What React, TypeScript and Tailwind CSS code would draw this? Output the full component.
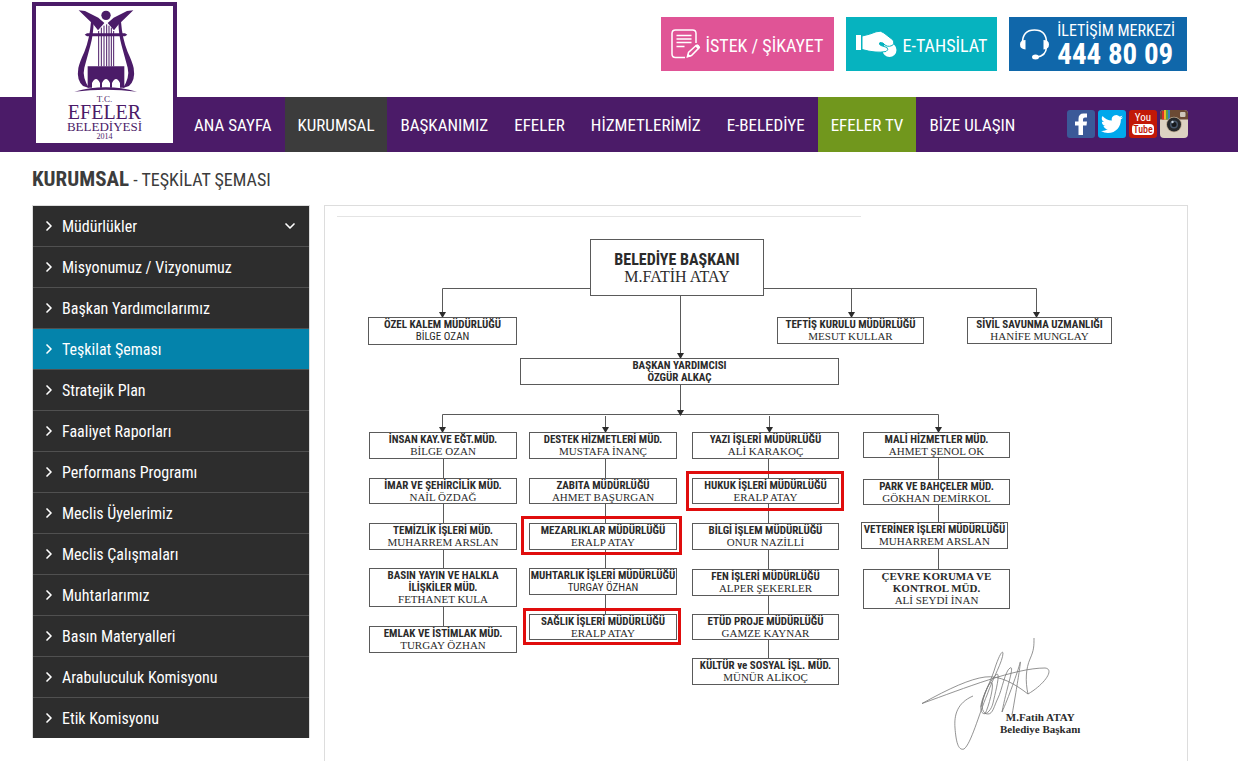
import { ReactNode } from "react";
import { ChevronDown, ChevronRight } from "lucide-react";

type NavItem = { label: string; className?: string };

const navItems: NavItem[] = [
  { label: "ANA SAYFA" },
  { label: "KURUMSAL", className: "bg-[#3c3c3c]" },
  { label: "BAŞKANIMIZ" },
  { label: "EFELER" },
  { label: "HİZMETLERİMİZ" },
  { label: "E-BELEDİYE" },
  { label: "EFELER TV", className: "bg-[#71971d]" },
  { label: "BİZE ULAŞIN" },
];

const sideItems = [
  "Müdürlükler",
  "Misyonumuz / Vizyonumuz",
  "Başkan Yardımcılarımız",
  "Teşkilat Şeması",
  "Stratejik Plan",
  "Faaliyet Raporları",
  "Performans Programı",
  "Meclis Üyelerimiz",
  "Meclis Çalışmaları",
  "Muhtarlarımız",
  "Basın Materyalleri",
  "Arabuluculuk Komisyonu",
  "Etik Komisyonu",
];

type ChartNode = {
  x: number;
  y: number;
  w: number;
  h: number;
  title: string[];
  name: string;
  kind?: "head" | "deputy" | "sans" | "serif";
};

const nodes: ChartNode[] = [
  { x: 265, y: 33, w: 174, h: 57, title: ["BELEDİYE BAŞKANI"], name: "M.FATİH ATAY", kind: "head" },
  { x: 43, y: 111, w: 149, h: 28, title: ["ÖZEL KALEM MÜDÜRLÜĞÜ"], name: "BİLGE OZAN", kind: "sans" },
  { x: 452, y: 111, w: 147, h: 27, title: ["TEFTİŞ KURULU MÜDÜRLÜĞÜ"], name: "MESUT KULLAR" },
  { x: 642, y: 111, w: 145, h: 27, title: ["SİVİL SAVUNMA UZMANLIĞI"], name: "HANİFE MUNGLAY" },
  { x: 195, y: 152, w: 319, h: 27, title: ["BAŞKAN YARDIMCISI"], name: "ÖZGÜR ALKAÇ", kind: "deputy" },

  { x: 44, y: 226, w: 148, h: 27, title: ["İNSAN KAY.VE EĞT.MÜD."], name: "BİLGE OZAN" },
  { x: 44, y: 272, w: 148, h: 26, title: ["İMAR VE ŞEHİRCİLİK MÜD."], name: "NAİL ÖZDAĞ" },
  { x: 44, y: 317, w: 148, h: 27, title: ["TEMİZLİK İŞLERİ MÜD."], name: "MUHARREM ARSLAN" },
  { x: 44, y: 362, w: 148, h: 39, title: ["BASIN YAYIN VE HALKLA", "İLİŞKİLER MÜD."], name: "FETHANET KULA" },
  { x: 44, y: 420, w: 148, h: 27, title: ["EMLAK VE İSTİMLAK MÜD."], name: "TURGAY ÖZHAN" },

  { x: 204, y: 226, w: 148, h: 27, title: ["DESTEK HİZMETLERİ MÜD."], name: "MUSTAFA İNANÇ" },
  { x: 204, y: 272, w: 148, h: 26, title: ["ZABITA MÜDÜRLÜĞÜ"], name: "AHMET BAŞURGAN" },
  { x: 204, y: 317, w: 148, h: 27, title: ["MEZARLIKLAR MÜDÜRLÜĞÜ"], name: "ERALP ATAY" },
  { x: 204, y: 362, w: 148, h: 27, title: ["MUHTARLIK İŞLERİ MÜDÜRLÜĞÜ"], name: "TURGAY ÖZHAN", kind: "sans" },
  { x: 204, y: 408, w: 148, h: 26, title: ["SAĞLIK İŞLERİ MÜDÜRLÜĞÜ"], name: "ERALP ATAY" },

  { x: 367, y: 226, w: 147, h: 27, title: ["YAZI İŞLERİ MÜDÜRLÜĞÜ"], name: "ALİ KARAKOÇ" },
  { x: 367, y: 272, w: 147, h: 26, title: ["HUKUK İŞLERİ MÜDÜRLÜĞÜ"], name: "ERALP ATAY" },
  { x: 367, y: 317, w: 147, h: 27, title: ["BİLGİ İŞLEM MÜDÜRLÜĞÜ"], name: "ONUR NAZİLLİ" },
  { x: 367, y: 363, w: 147, h: 27, title: ["FEN İŞLERİ MÜDÜRLÜĞÜ"], name: "ALPER ŞEKERLER" },
  { x: 367, y: 408, w: 147, h: 26, title: ["ETÜD PROJE MÜDÜRLÜĞÜ"], name: "GAMZE KAYNAR" },
  { x: 367, y: 452, w: 147, h: 27, title: ["KÜLTÜR ve SOSYAL İŞL. MÜD."], name: "MÜNÜR ALİKOÇ" },

  { x: 538, y: 226, w: 147, h: 26, title: ["MALİ HİZMETLER MÜD."], name: "AHMET ŞENOL OK" },
  { x: 538, y: 273, w: 147, h: 26, title: ["PARK VE BAHÇELER MÜD."], name: "GÖKHAN DEMİRKOL" },
  { x: 536, y: 316, w: 147, h: 27, title: ["VETERİNER İŞLERİ MÜDÜRLÜĞÜ"], name: "MUHARREM ARSLAN" },
  { x: 538, y: 363, w: 147, h: 40, title: ["ÇEVRE KORUMA VE", "KONTROL MÜD."], name: "ALİ SEYDİ İNAN", kind: "serif" },
];

const marks = [
  { x: 361, y: 265, w: 158, h: 40 },
  { x: 196, y: 310, w: 161, h: 39 },
  { x: 198, y: 402, w: 158, h: 37 },
];

const arrows = [
  [117, 111],
  [526, 111],
  [711, 111],
  [355, 152],
  [355, 209],
  [117, 226],
  [280, 226],
  [444, 226],
  [613, 226],
];

const Logo = () => (
  <a
    href="#"
    className="absolute left-8 top-[2px] flex h-[145px] w-[145px] flex-col items-center border-4 border-[#4b1b68] bg-white pt-[3px] font-['Liberation_Serif',serif] text-[#4b1b68]"
  >
    <svg width="64" height="84" viewBox="216 26 192 252" fill="currentColor" className="shrink-0">
      <circle cx="315" cy="45" r="14" />
      <path d="M233 30 252 32 292 52 310 68 291 90 278 73Z" />
      <path d="M397 30 378 32 338 52 320 68 339 90 352 73Z" />
      <path d="M270 64h8q-1 40-10 72l-18 66q-7 28 14 61l-18-6q-20-18-14-54 4-18 18-48 16-40 20-91Z" />
      <path d="M360 64h-8q1 40 10 72l18 66q7 28-14 61l18-6q20-18 14-54-4-18-18-48-16-40-20-91Z" />
      <path d="M251 103 258 99 372 99 379 103 372 108 258 108Z" />
      <path
        d="M293 92V198M301 82V198M309 76V198M317 72V198M324 76V198M331 82V198M338 92V198"
        stroke="currentColor"
        strokeWidth="3"
      />
      <path d="M260 198H370V262H357V248Q345 224 333 248V262H327V248Q315 224 303 248V262H297V248Q285 224 273 248V262H260Z" />
      <path d="M220 274Q315 248 408 274 315 262 220 274Z" />
    </svg>
    <span className="mt-[2px] text-[9px] leading-[8px]">T.C.</span>
    <span className="text-[20px] leading-[18px]">EFELER</span>
    <span className="text-[13px] leading-[12px]">BELEDİYESİ</span>
    <span className="text-[8px] leading-[8px]">2014</span>
  </a>
);

const TopButton = ({ className, children }: { className: string; children: ReactNode }) => (
  <a href="#" className={`flex h-[54px] items-center text-lg text-white ${className}`}>
    {children}
  </a>
);

const NoteIcon = () => (
  <svg width="30" height="30" viewBox="0 0 30 30" fill="none" stroke="#fff" strokeWidth="1.5">
    <path d="M14 28.500H4.500Q1 28.500 1 25V4.500Q1 1 4.500 1H21.500Q25 1 25 4.500V14" />
    <path d="M5.500 6.500h15M5.500 10h15M5.500 13.500h15M5.500 17.500h8" />
    <path d="M16.500 27.500 17.500 23.500 25 16.500Q27 15.500 28.300 18.500L20.500 26.500Z" />
    <path d="m24 17 3.500 3.500 1.500-2.500-2.500-2.500ZM15.500 28.800l4.500-1.300-3-3Z" fill="#fff" stroke="none" />
  </svg>
);

const HandIcon = () => (
  <svg width="41" height="27" viewBox="0 0 41 27" fill="#fff">
    <path d="M0 4h5v15H0z" />
    <circle cx="33.500" cy="19" r="7" />
    <path
      d="M6 5Q14 3.500 20 .8 25-1 28 2L37 9Q39 13 36 14.500 31 17 27 12L24 11.500Q22 13 25 14.500L31 16.500Q33 19 30 20.500 20 22.500 6 18.500Z"
      stroke="#06b3bf"
      strokeWidth="1"
    />
  </svg>
);

const HeadsetIcon = () => (
  <svg width="31" height="31" viewBox="0 0 31 31" fill="none" stroke="#fff" strokeWidth="1.600">
    <path d="M3.500 14Q3.500 1 15.500 1T27.500 14M27.500 18Q27 27 18 28" />
    <path
      d="M6.500 11v9.500Q1 20 1 15.500T6.500 11ZM24.500 11v9.500Q30 20 30 15.500T24.500 11Z"
      fill="#fff"
      stroke="none"
    />
    <ellipse cx="16.500" cy="28" rx="3.500" ry="2.500" fill="#fff" stroke="none" />
  </svg>
);

const Social = () => (
  <div className="ml-auto flex gap-[3px] self-start pt-[13px]">
    <a href="#" aria-label="Facebook">
      <svg width="28" height="28" viewBox="0 0 28 28">
        <rect width="28" height="28" rx="3" fill="#3b5998" />
        <path d="M11.500 25V15.500H8V11.500H11.500V9Q11.500 3.500 16.500 3.500H20V7.500H18Q16 7.500 16 9.200V11.500H20L19.500 15.500H16V25Z" fill="#fff" />
      </svg>
    </a>
    <a href="#" aria-label="Twitter">
      <svg width="28" height="28" viewBox="0 0 28 28">
        <rect width="28" height="28" rx="3" fill="#00a8ec" />
        <path
          transform="translate(3 3) scale(.92)"
          fill="#fff"
          d="M23.950 4.570a10 10 0 0 1-2.820.770 4.960 4.960 0 0 0 2.160-2.720c-.950.550-2 .950-3.130 1.180a4.920 4.920 0 0 0-8.380 4.480C7.690 8.090 4.070 6.130 1.640 3.160a4.920 4.920 0 0 0 1.520 6.570 4.900 4.900 0 0 1-2.230-.610v.060a4.920 4.920 0 0 0 3.950 4.830 5 5 0 0 1-2.210.080 4.940 4.940 0 0 0 4.600 3.420A9.870 9.870 0 0 1 0 19.540a14 14 0 0 0 7.550 2.210c9.050 0 14-7.500 14-13.980 0-.210 0-.420-.020-.630a9.940 9.940 0 0 0 2.460-2.550z"
        />
      </svg>
    </a>
    <a
      href="#"
      className="flex size-7 flex-col items-center rounded-[3px] bg-[#c21807] pt-[2px] text-[11px] leading-[12px] text-white"
    >
      <span>You</span>
      <span className="rounded-[4px] bg-white px-px text-[10px] font-medium leading-[11px] text-[#c21807]">Tube</span>
    </a>
    <a href="#" aria-label="Instagram">
      <svg width="28" height="28" viewBox="0 0 28 28">
        <rect width="28" height="28" rx="4" fill="#ddd2c2" />
        <path d="M0 9.500V4Q0 0 4 0H24Q28 0 28 4V9.500Z" fill="#6b4a34" />
        <path d="M2 1h2v8.500H2z" fill="#d5302c" />
        <path d="M4 0h2v9.500H4z" fill="#f0b429" />
        <path d="M6 0h2v9.500H6z" fill="#58a646" />
        <path d="M8 0h2v9.500H8z" fill="#3a7fc1" />
        <rect x="20" y="2" width="5.500" height="5" rx="1" fill="#cfc6ba" />
        <circle cx="14" cy="14.500" r="7.800" fill="#b7a58e" />
        <circle cx="14" cy="14.500" r="7" fill="#26282b" />
        <circle cx="14" cy="14.500" r="4" fill="#46566a" />
        <circle cx="14" cy="14.500" r="2.500" fill="#15181c" />
        <circle cx="12.500" cy="12" r="1.200" fill="#c5d3e2" />
      </svg>
    </a>
  </div>
);

const NodeBox = ({ node }: { node: ChartNode }) => {
  const big = node.kind === "head";
  return (
    <div
      className={`absolute flex flex-col items-center whitespace-nowrap border border-[#5a5a5a] bg-white text-[#2b2b2b] ${
        big ? "justify-center" : ""
      }`}
      style={{ left: node.x, top: node.y, width: node.w, height: node.h }}
    >
      {node.title.map((line) => (
        <p
          key={line}
          className={`font-bold ${big ? "text-base leading-[18px]" : "text-[11px] leading-[12px]"} ${
            node.kind === "serif" ? "font-['Liberation_Serif',serif]" : "pt-px -mb-px"
          }`}
        >
          {line}
        </p>
      ))}
      <p
        className={`${big ? "text-base leading-[18px]" : "text-[11px] leading-[12px]"} ${
          node.kind === "deputy" || node.kind === "sans" ? "pt-px" : "font-['Liberation_Serif',serif]"
        } ${node.kind === "deputy" ? "font-bold" : ""}`}
      >
        {node.name}
      </p>
    </div>
  );
};

const OrgChart = () => (
  <div className="relative h-[548px] w-[812px]">
    <svg width="812" height="548" className="absolute left-0 top-0" fill="none" stroke="#5a5a5a">
      <path d="M12 10.500H536" stroke="#e4e4e4" />
      <path d="M117.500 111V82.500H711.500V111M526.500 82.500V111M355.500 90V208.500M117.500 226V208.500H613.500V226M280.500 210V226M444.500 210V226" />
      <path d="M118.500 240V430M280.500 240V420M443.500 240V460M613.500 240V370" />
      {arrows.map(([x, y]) => (
        <path key={`${x}-${y}`} d={`M${x - 3} ${y - 5}h7l-3.500 6z`} fill="#2b2b2b" stroke="none" />
      ))}
      <g stroke="#777" strokeWidth=".8">
        <path d="M597 497.500C625 482 645 473 660 471S690 478 703 488C700 475 701 462 705 453S709 440 709 432" />
        <path d="M597 497.500C640 482 690 462 720 462 730 463 720 478 703 488" />
        <path d="M648 490C632 497 629 509 630 522S633 545 639 543C646 538 654 508 662 489 668 472 678 455 678 447 677 443 672 455 669 465 664 480 654 496 656 504 658 512 666 506 668 497S674 473 673 469 663 478 659 490 658 508 663 508 669 500 673 492 680 465 685 462 682 480 677 506" />
        <path d="M677 506C683 493 693 465 695 457S691 487 687 509M656 501C660 485 665 474 667 477S664 500 660 508" />
      </g>
    </svg>
    {nodes.map((node) => (
      <NodeBox key={`${node.x}-${node.y}`} node={node} />
    ))}
    {marks.map((m) => (
      <div
        key={`${m.x}-${m.y}`}
        className="absolute border-3 border-[#e00d0d]"
        style={{ left: m.x, top: m.y, width: m.w, height: m.h }}
      />
    ))}
    <div className="absolute left-[675px] top-[505px] text-center font-['Liberation_Serif',serif] text-[11px] font-bold leading-[12px] text-[#2b2b2b]">
      <p>M.Fatih ATAY</p>
      <p>Belediye Başkanı</p>
    </div>
  </div>
);

const App = () => {
  return (
    <div className="flex min-h-screen flex-col bg-white font-['Roboto_Condensed',Roboto,sans-serif]">
      <header className="relative">
        <div className="flex justify-end gap-3 pb-[26px] pr-[51px] pt-[17px]">
          <TopButton className="bg-[#e05496] pl-[10px] pr-[10px]">
            <NoteIcon />
            <span className="ml-1 pt-1">İSTEK / ŞİKAYET</span>
          </TopButton>
          <TopButton className="bg-[#06b3bf] pl-[10px] pr-[10px]">
            <HandIcon />
            <span className="ml-[6px] pt-1">E-TAHSİLAT</span>
          </TopButton>
          <TopButton className="bg-[#1067aa] pl-[10px] pr-3">
            <HeadsetIcon />
            <span className="ml-[7px] flex flex-col">
              <span className="text-base leading-5">İLETİŞİM MERKEZİ</span>
              <span className="text-[29px] font-bold leading-[26px]">444 80 09</span>
            </span>
          </TopButton>
        </div>
        <nav className="flex h-[55px] items-center bg-[#4b1b68] pl-[181px] pr-[50px]">
          {navItems.map((item) => (
            <a
              key={item.label}
              href="#"
              className={`flex h-full items-center whitespace-nowrap px-[13px] pt-[2px] text-[17px] text-white ${item.className ?? ""}`}
            >
              {item.label}
            </a>
          ))}
          <Social />
        </nav>
        <Logo />
      </header>

      <main className="flex flex-1 flex-col pl-8 pr-[50px]">
        <h1 className="pb-[10px] pt-3 text-lg leading-[31px] text-[#3c3c3c]">
          <span className="text-[21px] font-bold">KURUMSAL</span> - TEŞKİLAT ŞEMASI
        </h1>
        <div className="flex flex-1 gap-[14px]">
          <aside className="w-[278px] shrink-0">
            <ul className="border border-b-0 border-[#ddd] bg-[#2d2d2d]">
              {sideItems.map((item, i) => (
                <li key={item} className="border-b border-[#505050] last:border-b-0">
                  <a
                    href="#"
                    className={`flex h-10 items-center pl-2 pr-[11px] text-base text-white ${
                      item === "Teşkilat Şeması" ? "bg-[#0483ab]" : ""
                    }`}
                  >
                    <ChevronRight size={16} strokeWidth={2.5} />
                    <span className="ml-[5px] pt-[2px]">{item}</span>
                    {i === 0 && <ChevronDown size={16} strokeWidth={2.5} className="ml-auto" />}
                  </a>
                </li>
              ))}
            </ul>
          </aside>
          <section className="flex-1 border border-b-0 border-[#ddd]">
            <OrgChart />
          </section>
        </div>
      </main>
    </div>
  );
};

export default App;
